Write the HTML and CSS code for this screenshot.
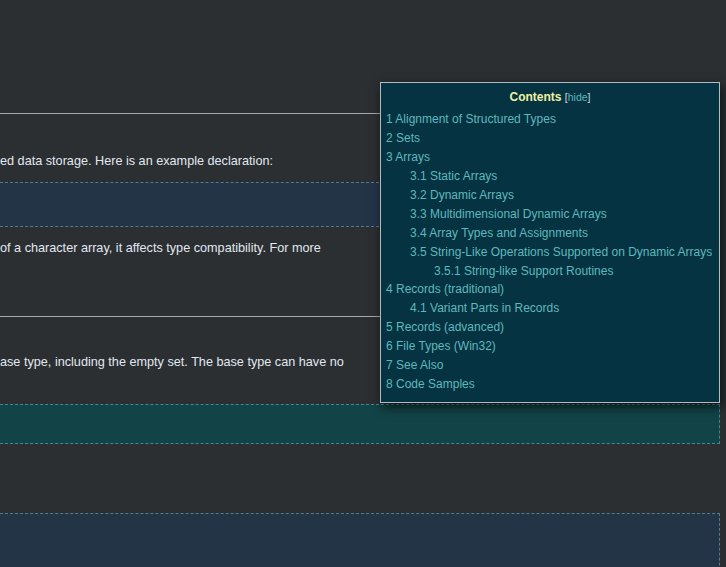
FILE: index.html
```html
<!DOCTYPE html>
<html lang="en">
<head>
<meta charset="utf-8">
<title>Structured Types</title>
<link rel="stylesheet" href="styles.css">
</head>
<body>
<div class="page">
  <div class="content">
    <div class="section-head"></div>
    <p class="para first">ed data storage. Here is an example declaration:</p>
    <pre class="code code-navy short"></pre>
    <p class="para after-code">of a character array, it affects type compatibility. For more</p>

    <div class="section-head second"></div>
    <p class="para second-first">ase type, including the empty set. The base type can have no</p>
    <pre class="code code-teal"></pre>
    <pre class="code code-navy tall"></pre>
  </div>

  <div class="toc">
    <div class="toc-title"><span class="toc-label">Contents</span> <span class="toc-toggle">[<a href="#">hide</a>]</span></div>
    <ul class="toc-list">
      <li><a href="#">1 Alignment of Structured Types</a></li>
      <li><a href="#">2 Sets</a></li>
      <li><a href="#">3 Arrays</a>
        <ul>
          <li><a href="#">3.1 Static Arrays</a></li>
          <li><a href="#">3.2 Dynamic Arrays</a></li>
          <li><a href="#">3.3 Multidimensional Dynamic Arrays</a></li>
          <li><a href="#">3.4 Array Types and Assignments</a></li>
          <li><a href="#">3.5 String-Like Operations Supported on Dynamic Arrays</a>
            <ul>
              <li><a href="#">3.5.1 String-like Support Routines</a></li>
            </ul>
          </li>
        </ul>
      </li>
      <li><a href="#">4 Records (traditional)</a>
        <ul>
          <li><a href="#">4.1 Variant Parts in Records</a></li>
        </ul>
      </li>
      <li><a href="#">5 Records (advanced)</a></li>
      <li><a href="#">6 File Types (Win32)</a></li>
      <li><a href="#">7 See Also</a></li>
      <li><a href="#">8 Code Samples</a></li>
    </ul>
  </div>
</div>
</body>
</html>
```

FILE: styles.css
```css
html {
  overflow: hidden;
  background: #2b2f32;
}

body {
  margin: 0;
  background: #2b2f32;
  font-family: "Liberation Sans", Arial, sans-serif;
  color: #e2e8f0;
}

.page {
  position: relative;
  min-height: 567px;
}

.content {
  margin-right: 6px;
  display: flex;
  flex-direction: column;
}

.section-head {
  height: 113px;
  border-bottom: 1px solid #a3a8ac;
}

.section-head.second {
  height: 39px;
}

.para {
  margin: 0;
  font-size: 12.66px;
  line-height: 19px;
  white-space: nowrap;
}

.para.first {
  margin-top: 38px;
}

.para.second-first {
  margin-top: 36px;
}

.para.after-code {
  margin-top: 12px;
  height: 38px;
}

.code {
  margin: 12px 0 0 -10px;
  border: 1px dashed #58788e;
  font-family: "Liberation Mono", monospace;
}

.code-navy {
  background: #243447;
}

.code-teal {
  margin-top: 32px;
  background: #124346;
  border-color: #4d8390;
  height: 38px;
}

.short {
  margin-top: 11px;
  height: 43px;
}

.tall {
  margin-top: 69px;
  height: 120px;
}

.toc {
  position: absolute;
  top: 82px;
  left: 380px;
  width: 340px;
  box-sizing: border-box;
  padding: 4px 5px 8px;
  background: #053341;
  border: 1px solid #aebdc4;
  box-shadow: 2px 4px 10px rgba(0, 0, 0, 0.65);
  font-size: 12px;
}

.toc a {
  color: #5fb8be;
  text-decoration: none;
}

.toc-title {
  text-align: center;
  line-height: 20px;
  margin-bottom: 3px;
}

.toc-label {
  font-weight: bold;
  color: #f0f2a2;
}

.toc-toggle {
  font-size: 10.5px;
  color: #c8dde2;
}

.toc-list,
.toc-list ul {
  list-style: none;
  margin: 0;
  padding: 0;
}

.toc-list ul {
  margin-left: 24px;
}

.toc-list li {
  line-height: 18.93px;
  white-space: nowrap;
}
```
